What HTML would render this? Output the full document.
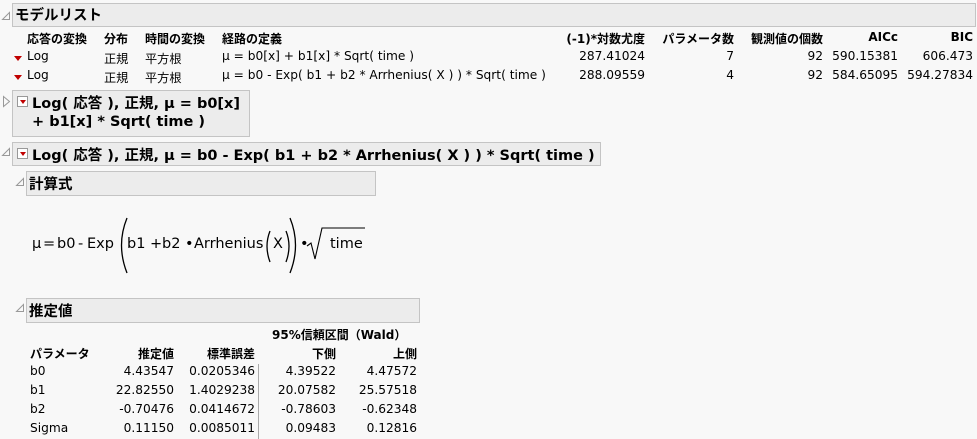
<!DOCTYPE html>
<html><head><meta charset="utf-8"><style>
body{margin:0;background:#f8f8f8;width:977px;height:439px;overflow:hidden;position:relative;font-family:"DejaVu Sans","Noto Sans CJK JP",sans-serif;font-size:12.2px;color:#000}
.a{position:absolute;white-space:nowrap}
.box{position:absolute;background:#ececec;border:1px solid #c4c4c4;box-sizing:border-box}
.t{font-weight:bold;font-size:14.5px}
.h{font-weight:bold;font-size:12px}
.r{text-align:right}
.rt{position:absolute;width:0;height:0;border-left:4px solid transparent;border-right:4px solid transparent;border-top:5px solid #c00000}
.mb{position:absolute;width:11px;height:11px;border:1px solid #999;background:#fff;box-sizing:border-box}
.mb:after{content:"";position:absolute;left:2px;top:3px;border-left:3px solid transparent;border-right:3px solid transparent;border-top:4px solid #c00000}
</style></head><body>
<svg class="a" style="left:0;top:0" width="977" height="439">
<g fill="none" stroke="#999" stroke-width="1">
<path d="M9.5 12.5 L2.5 19.5 L9.5 19.5 Z"/>
<path d="M3.5 96.5 L9.5 101.5 L3.5 106.5 Z"/>
<path d="M9.5 148.5 L2.5 155.5 L9.5 155.5 Z"/>
<path d="M23.5 178.5 L16.5 185.5 L23.5 185.5 Z"/>
<path d="M23.5 304.5 L16.5 311.5 L23.5 311.5 Z"/>
</g>
<line x1="258.5" y1="364" x2="258.5" y2="439" stroke="#aaa"/>
</svg>
<div class="box" style="left:12px;top:3px;width:964px;height:24px"></div>
<div class="a t" style="left:15px;top:4px">モデルリスト</div>
<div class="a h" style="left:27px;top:30px">応答の変換</div>
<div class="a h" style="left:104px;top:30px">分布</div>
<div class="a h" style="left:145px;top:30px">時間の変換</div>
<div class="a h" style="left:222px;top:30px">経路の定義</div>
<div class="a h r" style="right:332px;top:30px">(-1)*対数尤度</div>
<div class="a h r" style="right:243px;top:30px">パラメータ数</div>
<div class="a h r" style="right:154px;top:30px">観測値の個数</div>
<div class="a h r" style="right:79px;top:30px">AICc</div>
<div class="a h r" style="right:4px;top:30px">BIC</div>
<div class="rt" style="left:14px;top:56px"></div>
<div class="a" style="left:27px;top:49px">Log</div><div class="a" style="left:104px;top:49px">正規</div><div class="a" style="left:145px;top:49px">平方根</div>
<div class="a" style="left:222px;top:49px">μ = b0[x] + b1[x] * Sqrt( time )</div>
<div class="a r" style="right:332px;top:49px">287.41024</div><div class="a r" style="right:243px;top:49px">7</div><div class="a r" style="right:154px;top:49px">92</div><div class="a r" style="right:79px;top:49px">590.15381</div><div class="a r" style="right:4px;top:49px">606.473</div>
<div class="rt" style="left:14px;top:75px"></div>
<div class="a" style="left:27px;top:68px">Log</div><div class="a" style="left:104px;top:68px">正規</div><div class="a" style="left:145px;top:68px">平方根</div>
<div class="a" style="left:222px;top:68px">μ = b0 - Exp( b1 + b2 * Arrhenius( X ) ) * Sqrt( time )</div>
<div class="a r" style="right:332px;top:68px">288.09559</div><div class="a r" style="right:243px;top:68px">4</div><div class="a r" style="right:154px;top:68px">92</div><div class="a r" style="right:79px;top:68px">584.65095</div><div class="a r" style="right:4px;top:68px">594.27834</div>

<div class="box" style="left:12px;top:90px;width:238px;height:47px"></div>
<div class="mb" style="left:17px;top:96px"></div>
<div class="a t" style="left:32px;top:92px">Log( 応答 ), 正規, μ = b0[x]</div>
<div class="a t" style="left:32px;top:114px">+ b1[x] * Sqrt( time )</div>

<div class="box" style="left:12px;top:142px;width:589px;height:24px"></div>
<div class="mb" style="left:17px;top:148px"></div>
<div class="a t" style="left:32px;top:144px">Log( 応答 ), 正規, μ = b0 - Exp( b1 + b2 * Arrhenius( X ) ) * Sqrt( time )</div>

<div class="box" style="left:26px;top:171px;width:350px;height:25px"></div>
<div class="a t" style="left:29px;top:173px">計算式</div>

<svg class="a" style="left:0;top:200px" width="380" height="90">
<g font-family="DejaVu Sans, sans-serif" font-size="14.5" fill="#000">
<text x="32" y="48">μ</text><text x="43" y="48">=</text><text x="57" y="48">b0</text>
<text x="78" y="48">-</text><text x="87" y="48">Exp</text>
<text x="127" y="48">b1</text><text x="150" y="48">+</text><text x="162" y="48">b2</text>
<text x="185" y="48">•</text><text x="194" y="48">Arrhenius</text>
<text x="273" y="48">X</text><text x="300" y="48">•</text>
<text x="330" y="48">time</text>
</g>
<g fill="none" stroke="#000" stroke-width="1.3">
<path d="M127 18 Q116 45 127 73"/>
<path d="M290 18 Q301 45 290 73"/>
<path d="M270 31 Q264 46 270 62"/>
<path d="M286 31 Q292 46 286 62"/>
<path d="M307 46 L311 43 L315 59 L322 28 L365 28" stroke-width="1.1"/>
</g>
</svg>

<div class="box" style="left:26px;top:298px;width:394px;height:25px"></div>
<div class="a t" style="left:29px;top:300px">推定値</div>
<div class="a h" style="left:272px;top:326px">95%信頼区間（Wald）</div>
<div class="a h" style="left:30px;top:345px">パラメータ</div>
<div class="a h r" style="right:803px;top:345px">推定値</div>
<div class="a h r" style="right:722px;top:345px">標準誤差</div>
<div class="a h r" style="right:641px;top:345px">下側</div>
<div class="a h r" style="right:560px;top:345px">上側</div>
<div class="a" style="left:30px;top:364px">b0</div><div class="a r" style="right:803px;top:364px">4.43547</div><div class="a r" style="right:722px;top:364px">0.0205346</div><div class="a r" style="right:641px;top:364px">4.39522</div><div class="a r" style="right:560px;top:364px">4.47572</div>
<div class="a" style="left:30px;top:383px">b1</div><div class="a r" style="right:803px;top:383px">22.82550</div><div class="a r" style="right:722px;top:383px">1.4029238</div><div class="a r" style="right:641px;top:383px">20.07582</div><div class="a r" style="right:560px;top:383px">25.57518</div>
<div class="a" style="left:30px;top:402px">b2</div><div class="a r" style="right:803px;top:402px">-0.70476</div><div class="a r" style="right:722px;top:402px">0.0414672</div><div class="a r" style="right:641px;top:402px">-0.78603</div><div class="a r" style="right:560px;top:402px">-0.62348</div>
<div class="a" style="left:30px;top:421px">Sigma</div><div class="a r" style="right:803px;top:421px">0.11150</div><div class="a r" style="right:722px;top:421px">0.0085011</div><div class="a r" style="right:641px;top:421px">0.09483</div><div class="a r" style="right:560px;top:421px">0.12816</div>
</body></html>
